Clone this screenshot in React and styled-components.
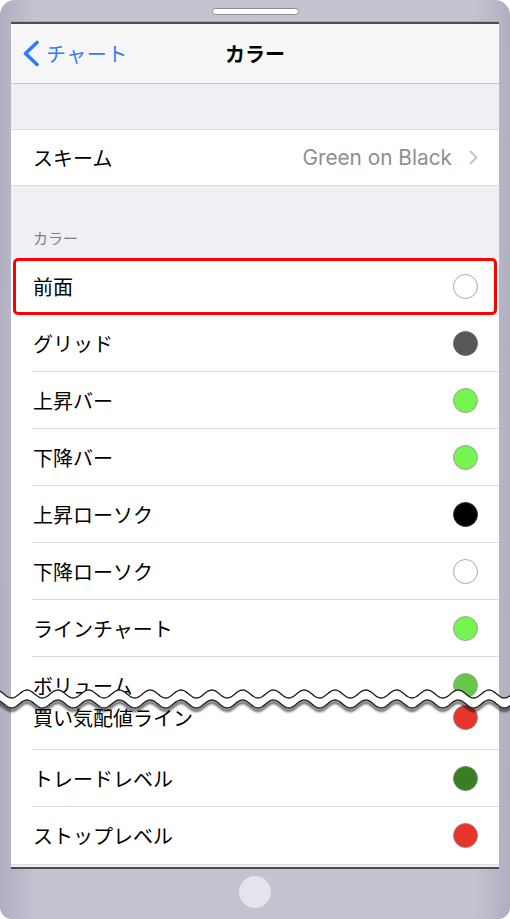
import React from "react";
import styled, { createGlobalStyle } from "styled-components";

const GlobalStyle = createGlobalStyle`
  html, body { margin: 0; padding: 0; background: #ffffff; }
  * { box-sizing: border-box; }
  body { font-family: Inter, "Noto Sans CJK JP", sans-serif; }
`;

const FONT = `Inter, "Noto Sans CJK JP", sans-serif`;

const Device = styled.div`
  position: relative;
  width: 510px;
  height: 919px;
  border-radius: 15px 15px 12px 12px;
  overflow: hidden;
  display: flex;
  flex-direction: column;
  background:
    linear-gradient(90deg, rgba(150,150,172,0.45) 0%, rgba(150,150,172,0) 7%, rgba(150,150,172,0) 93%, rgba(150,150,172,0.45) 100%),
    linear-gradient(180deg, #c3c3d1 0%, #c6c6d4 50%, #c2c2d0 100%);
`;

const TopBezel = styled.div`
  height: 22px;
  flex: none;
  display: flex;
  justify-content: center;
  padding-top: 8px;
`;

const Speaker = styled.div`
  width: 87px;
  height: 7px;
  border-radius: 4px;
  background: #ffffff;
  border: 1px solid #8c8c94;
`;

const Screen = styled.div`
  flex: none;
  height: 847px;
  margin: 0 11px;
  display: flex;
  flex-direction: column;
  background: #efeff4;
  border-top: 2px solid #4e4e52;
  border-bottom: 2px solid #4e4e52;
  box-shadow: 0 -1px 0 #a8a8b0;
  overflow: hidden;
  font-family: ${FONT};
`;

const NavBar = styled.div`
  flex: none;
  height: 60px;
  background: #f7f7f8;
  border-bottom: 1px solid #c8c7cc;
  display: grid;
  grid-template-columns: 1fr auto 1fr;
  align-items: center;
  padding: 0 11px;
`;

const BackButton = styled.div`
  display: flex;
  align-items: center;
  gap: 6px;
  color: #2f7cf6;
  font-size: 20px;
  letter-spacing: 0.5px;
`;

const Title = styled.div`
  font-size: 20px;
  font-weight: 700;
  color: #000;
`;

const Gap = styled.div`
  flex: none;
  height: ${(p) => p.$h}px;
`;

const Group = styled.div`
  flex: none;
  background: #ffffff;
  border-top: 1px solid #dcdce0;
  border-bottom: 1px solid #dcdce0;
`;

const SchemeRow = styled.div`
  height: 55px;
  display: flex;
  align-items: center;
  padding: 0 21px 0 22px;
  font-size: 20px;
  color: #000;
`;

const Label = styled.div`
  flex: 1;
  font-size: 20px;
  color: #000;
  white-space: nowrap;
`;

const Value = styled.div`
  font-size: 20.8px;
  color: #8e8e93;
  margin-right: 17px;
`;

const SectionHeader = styled.div`
  flex: none;
  height: 72px;
  display: flex;
  align-items: flex-end;
  padding: 0 0 9px 22px;
  font-size: 15px;
  line-height: 20px;
  color: #7f7f84;
`;

const List = styled.div`
  flex: none;
  background: #ffffff;
  border-bottom: 1px solid #dcdce0;
`;

const Row = styled.div`
  position: relative;
  padding-left: 21px;
  background: #ffffff;
`;

const RowInner = styled.div`
  height: ${(p) => (p.$cut ? 50 : 57)}px;
  display: flex;
  align-items: center;
  padding: 0 21px ${(p) => (p.$cut ? 14 : 0)}px 1px;
  border-bottom: ${(p) => (p.$last ? "none" : "1px solid #dcdce0")};
`;

const Clip = styled.div`
  height: ${(p) => p.$h}px;
  overflow: hidden;
`;

const Swatch = styled.div`
  width: 25px;
  height: 25px;
  border-radius: 50%;
  flex: none;
  background: ${(p) => p.$color};
  border: 1px solid ${(p) => p.$border};
`;

const Highlight = styled.div`
  position: absolute;
  top: 0;
  bottom: 0;
  left: 2px;
  right: 2px;
  border: 3px solid #ff0000;
  border-radius: 5px;
  pointer-events: none;
`;

const BottomBezel = styled.div`
  flex: 1;
  display: flex;
  justify-content: center;
  padding-top: 7px;
`;

const HomeButton = styled.div`
  width: 32px;
  height: 32px;
  border-radius: 50%;
  background: #e4e4ec;
`;

const Tear = styled.svg`
  position: absolute;
  left: 0;
  top: 684px;
  width: 510px;
  height: 34px;
  overflow: visible;
`;

const rows = [
  { label: "前面", color: "#ffffff", border: "#aaaaaa", highlight: true },
  { label: "グリッド", color: "#575757", border: "#6a6a6a" },
  { label: "上昇バー", color: "#76f550", border: "#a0a0a0" },
  { label: "下降バー", color: "#76f550", border: "#a0a0a0" },
  { label: "上昇ローソク", color: "#000000", border: "#333333" },
  { label: "下降ローソク", color: "#ffffff", border: "#aaaaaa" },
  { label: "ラインチャート", color: "#76f550", border: "#a0a0a0" },
];

const cutTop = { label: "ボリューム", color: "#65c84a", border: "#8fae86" };
const cutBottom = { label: "買い気配値ライン", color: "#e8352a", border: "#b07a76" };
const rest = [
  { label: "トレードレベル", color: "#3a7d23", border: "#6f8a66" },
  { label: "ストップレベル", color: "#e8352a", border: "#b07a76", last: true },
];

function ColorRow({ item, cut }) {
  return (
    <Row>
      <RowInner $cut={cut} $last={item.last}>
        <Label>{item.label}</Label>
        <Swatch $color={item.color} $border={item.border} />
      </RowInner>
      {item.highlight && <Highlight />}
    </Row>
  );
}

function wavePoints(base, amp, period, phase) {
  const pts = [];
  for (let x = -2; x <= 512; x += 1) {
    const y = base - amp * Math.cos((2 * Math.PI * (x - phase)) / period);
    pts.push([x, y]);
  }
  return pts;
}

function TearLine() {
  const period = 30.8;
  const phase = 27;
  const up = wavePoints(10, 4, period, phase);
  const low = wavePoints(20, 4, period, phase);
  const toD = (pts) => pts.map((p, i) => `${i ? "L" : "M"}${p[0].toFixed(1)},${p[1].toFixed(2)}`).join(" ");
  const fill = toD(up) + " " + low.slice().reverse().map((p) => `L${p[0].toFixed(1)},${p[1].toFixed(2)}`).join(" ") + " Z";
  const shadow = toD(low.map(([x, y]) => [x, y + 2.5]));
  return (
    <Tear viewBox="0 0 510 34">
      <defs>
        <filter id="tearBlur" x="-5%" y="-100%" width="110%" height="300%">
          <feGaussianBlur stdDeviation="1.3" />
        </filter>
      </defs>
      <path d={shadow} fill="none" stroke="rgba(0,0,0,0.6)" strokeWidth="3" filter="url(#tearBlur)" />
      <path d={fill} fill="#ffffff" />
      <path d={toD(up)} fill="none" stroke="#1a1a1a" strokeWidth="1.3" />
      <path d={toD(low)} fill="none" stroke="#1a1a1a" strokeWidth="1.3" />
    </Tear>
  );
}

export default function App() {
  return (
    <>
      <GlobalStyle />
      <Device>
        <TopBezel>
          <Speaker />
        </TopBezel>
        <Screen>
          <NavBar>
            <BackButton>
              <svg width="18" height="27" viewBox="0 0 18 27">
                <polyline points="15,2.5 3.5,13.5 15,24.5" fill="none" stroke="#2f7cf6" strokeWidth="3.6" strokeLinecap="round" strokeLinejoin="round" />
              </svg>
              <span>チャート</span>
            </BackButton>
            <Title>カラー</Title>
            <div />
          </NavBar>
          <Gap $h={45} />
          <Group>
            <SchemeRow>
              <Label>スキーム</Label>
              <Value>Green on Black</Value>
              <svg width="9" height="15" viewBox="0 0 9 15">
                <polyline points="1.5,1.5 7.5,7.5 1.5,13.5" fill="none" stroke="#c4c4c9" strokeWidth="2" strokeLinecap="round" strokeLinejoin="round" />
              </svg>
            </SchemeRow>
          </Group>
          <SectionHeader>カラー</SectionHeader>
          <List>
            {rows.map((r) => (
              <ColorRow key={r.label} item={r} />
            ))}
            <Clip $h={43}>
              <ColorRow item={cutTop} />
            </Clip>
            <ColorRow item={cutBottom} cut />
            {rest.map((r) => (
              <ColorRow key={r.label} item={r} />
            ))}
          </List>
        </Screen>
        <BottomBezel>
          <HomeButton />
        </BottomBezel>
        <TearLine />
      </Device>
    </>
  );
}
